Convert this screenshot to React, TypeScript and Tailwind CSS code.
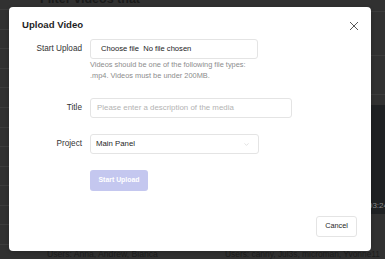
import { ChevronDown } from "lucide-react";

const rows = Array.from({ length: 12 }, (_, i) => i);

function FieldRow({ label, children }: { label: string; children: React.ReactNode }) {
  return (
    <div className="flex items-start gap-[8px]">
      <div className="w-[60px] shrink-0 text-right text-[8.2px] leading-[20px] text-[#333]">{label}</div>
      <div className="flex flex-col">{children}</div>
    </div>
  );
}

export default function App() {
  return (
    <div className="relative w-[385px] h-[259px] overflow-hidden bg-[#313131] font-['Liberation_Sans',Arial,sans-serif]">
      {/* page behind the modal */}
      <div className="flex h-full">
        <div className="w-[200px] flex flex-col">
          <div className="h-[10px] border-b border-[#3c3c3c] pl-[40px]">
            <p className="-mt-[7px] text-[12.5px] leading-[12px] font-bold text-[#1a1a1a] whitespace-nowrap">Filter videos that</p>
          </div>
          {rows.map((r) => (
            <div key={r} className="h-[19.7px] border-b border-[#3c3c3c]" />
          ))}
          <p className="pl-[47px] pt-[4px] text-[8.6px] leading-[10px] text-[#1c1c1c] whitespace-nowrap">Users: Anna, Andrew, Bianca</p>
        </div>
        <div className="flex-1 flex flex-col">
          <div className="h-[12px] border-b border-[#3c3c3c]" />
          <div className="h-[45px] border-b border-[#3c3c3c]" />
          <div className="h-[40px] border-b border-[#3c3c3c]" />
          <div className="h-[10px]" />
          <div className="h-[111px] bg-[#1f2123] flex items-end justify-end pb-[3px]">
            <span className="text-[8px] leading-[10px] text-[#8a8a8a] -mr-[3px]">03:24</span>
          </div>
          <p className="pl-[25px] pt-[35px] text-[8.4px] leading-[10px] text-[#1c1c1c] whitespace-nowrap">Users: canny, Jul3s, microman, Yvonne11</p>
        </div>
      </div>

      {/* modal */}
      <div className="absolute left-[9px] top-[7px] w-[362px] h-[244px] bg-white rounded-[4px] shadow-[0_1px_4px_rgba(0,0,0,0.2)] flex flex-col pl-[13px] pr-[12px] pt-[12px]">
        <div className="h-[13px] flex items-center justify-between">
          <h2 className="text-[9.6px] font-bold text-[#1f1f1f]">Upload Video</h2>
          <svg width="10" height="10" viewBox="0 0 10 10" className="text-[#595959]">
            <path d="M1 1L9 9M9 1L1 9" stroke="currentColor" strokeWidth="1" fill="none" />
          </svg>
        </div>

        <div className="mt-[7px] flex flex-col">
          <FieldRow label="Start Upload">
            <div className="w-[168px] h-[20px] border border-[#e4e4e4] rounded-[3px] flex items-center pl-[10px] text-[7.6px] text-[#222] whitespace-pre">
              Choose file  No file chosen
            </div>
            <p className="w-[168px] text-[7.4px] leading-[11px] text-[#8c8c8c]">
              Videos should be one of the following file types: .mp4. Videos must be under 200MB.
            </p>
          </FieldRow>

          <div className="mt-[17px]">
            <FieldRow label="Title">
              <div className="w-[202px] h-[20px] border border-[#e4e4e4] rounded-[3px] flex items-center pl-[6px] text-[7.9px] text-[#b3b3b3] whitespace-nowrap">
                Please enter a description of the media
              </div>
            </FieldRow>
          </div>

          <div className="mt-[16px]">
            <FieldRow label="Project">
              <div className="w-[169px] h-[20px] border border-[#e4e4e4] rounded-[3px] flex items-center justify-between pl-[5px] pr-[8px] text-[7.8px] text-[#262626]">
                <span>Main Panel</span>
                <ChevronDown size={7} strokeWidth={1.5} className="text-[#bdbdbd]" />
              </div>
            </FieldRow>
          </div>

          <button className="mt-[16px] ml-[68px] w-[58px] h-[21px] rounded-[3px] bg-[#c4c7ef] text-white text-[6.9px] font-bold">
            Start Upload
          </button>
        </div>

        <div className="mt-[25px] mr-[2px] flex justify-end">
          <button className="w-[41px] h-[21px] rounded-[3px] border border-[#e4e4e4] bg-white text-[7.3px] text-[#262626]">
            Cancel
          </button>
        </div>
      </div>
    </div>
  );
}
